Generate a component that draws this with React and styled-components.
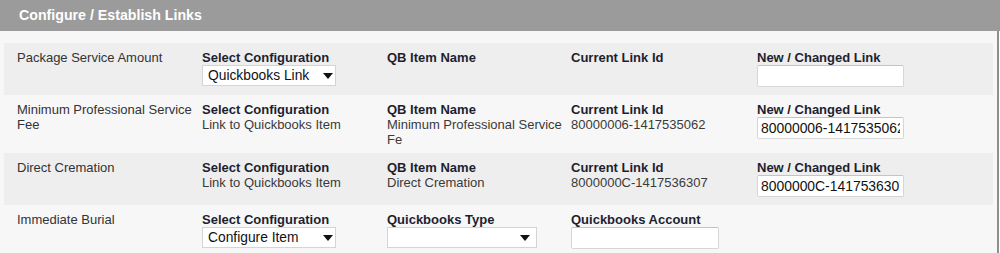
import React from 'react';
import styled, { createGlobalStyle } from 'styled-components';

const rows = [
  {
    label: 'Package Service Amount',
    kind: 'link',
    select: 'Quickbooks Link',
    input: '',
  },
  {
    label: 'Minimum Professional Service Fee',
    kind: 'linked',
    config: 'Link to Quickbooks Item',
    itemName: 'Minimum Professional Service Fe',
    linkId: '80000006-1417535062',
    input: '80000006-1417535062',
  },
  {
    label: 'Direct Cremation',
    kind: 'linked',
    config: 'Link to Quickbooks Item',
    itemName: 'Direct Cremation',
    linkId: '8000000C-1417536307',
    input: '8000000C-1417536307',
  },
  {
    label: 'Immediate Burial',
    kind: 'configure',
    select: 'Configure Item',
  },
];

export default function App() {
  return (
    <>
      <GlobalStyle />
      <Panel>
        <PanelHeader>Configure / Establish Links</PanelHeader>
        <PanelBody>
          {rows.map((row, i) => (
            <LinkRow key={row.label} shaded={i % 2 === 0}>
              <Cell>
                <Label>{row.label}</Label>
              </Cell>
              <Cell>
                <Heading>Select Configuration</Heading>
                {row.kind === 'linked' ? (
                  <Value>{row.config}</Value>
                ) : (
                  <SelectBox width={134} arrowRight={3}>
                    <Select defaultValue={row.select}>
                      <option>{row.select}</option>
                    </Select>
                  </SelectBox>
                )}
              </Cell>
              {row.kind === 'configure' ? (
                <>
                  <Cell>
                    <Heading>Quickbooks Type</Heading>
                    <SelectBox width={150} arrowRight={7}>
                      <Select defaultValue="">
                        <option value=""></option>
                      </Select>
                    </SelectBox>
                  </Cell>
                  <Cell>
                    <Heading>Quickbooks Account</Heading>
                    <TextInput width={148} defaultValue="" />
                  </Cell>
                  <Cell />
                </>
              ) : (
                <>
                  <Cell>
                    <Heading>QB Item Name</Heading>
                    {row.itemName && <Value>{row.itemName}</Value>}
                  </Cell>
                  <Cell>
                    <Heading>Current Link Id</Heading>
                    {row.linkId && <Value>{row.linkId}</Value>}
                  </Cell>
                  <Cell>
                    <Heading>New / Changed Link</Heading>
                    <TextInput width={147} defaultValue={row.input} />
                  </Cell>
                </>
              )}
            </LinkRow>
          ))}
        </PanelBody>
      </Panel>
    </>
  );
}

const GlobalStyle = createGlobalStyle`
  html, body {
    margin: 0;
    padding: 0;
    background: #ffffff;
  }
  body {
    font-family: "Liberation Sans", Arial, sans-serif;
    font-size: 13px;
    color: #333;
  }
`;

const Panel = styled.div`
  width: 1000px;
  height: 253px;
  overflow: hidden;
  background: #ffffff;
`;

const PanelHeader = styled.div`
  height: 31px;
  background: #9b9b9b;
  color: #ffffff;
  font-weight: bold;
  font-size: 14.2px;
  line-height: 31px;
  padding-left: 19px;
`;

const PanelBody = styled.div`
  width: 989px;
  margin-right: 1px;
  border-right: 2px solid #8f8f8f;
  background: #f7f7f7;
  padding: 12px 4px 0 4px;
  min-height: 230px;
  display: flex;
  flex-direction: column;
`;

const LinkRow = styled.div`
  display: grid;
  grid-template-columns: 185px 185px 184px 186px 1fr;
  padding: 7px 0 6px 13px;
  background: ${(p) => (p.shaded ? '#eeeeee' : '#f7f7f7')};
`;

const Cell = styled.div`
  display: flex;
  flex-direction: column;
  align-items: flex-start;
  min-height: 39px;
  padding-right: 2px;
  line-height: 15px;
`;

const Label = styled.span`
  color: #333333;
`;

const Heading = styled.span`
  font-weight: bold;
  color: #1e1f2e;
`;

const Value = styled.span`
  color: #3a3a3a;
`;

const SelectBox = styled.div`
  position: relative;
  width: ${(p) => p.width}px;
  height: 21px;

  &::after {
    content: '';
    position: absolute;
    right: ${(p) => p.arrowRight}px;
    top: 8px;
    border-left: 5.5px solid transparent;
    border-right: 5.5px solid transparent;
    border-top: 6px solid #111;
    pointer-events: none;
  }
`;

const Select = styled.select`
  appearance: none;
  -webkit-appearance: none;
  width: 100%;
  height: 100%;
  box-sizing: border-box;
  border: 1px solid #d4d4d4;
  border-radius: 0;
  background: #ffffff;
  font-family: "Liberation Sans", Arial, sans-serif;
  font-size: 13.8px;
  color: #111;
  padding: 0 0 0 5px;
  outline: none;
`;

const TextInput = styled.input`
  width: ${(p) => p.width}px;
  height: 22px;
  box-sizing: border-box;
  border: 1px solid #d6d6d6;
  border-top-color: #c4c4c4;
  border-radius: 2px;
  background: #ffffff;
  font-family: "Liberation Sans", Arial, sans-serif;
  font-size: 13.9px;
  color: #111;
  padding: 0 3px;
  outline: none;
`;
